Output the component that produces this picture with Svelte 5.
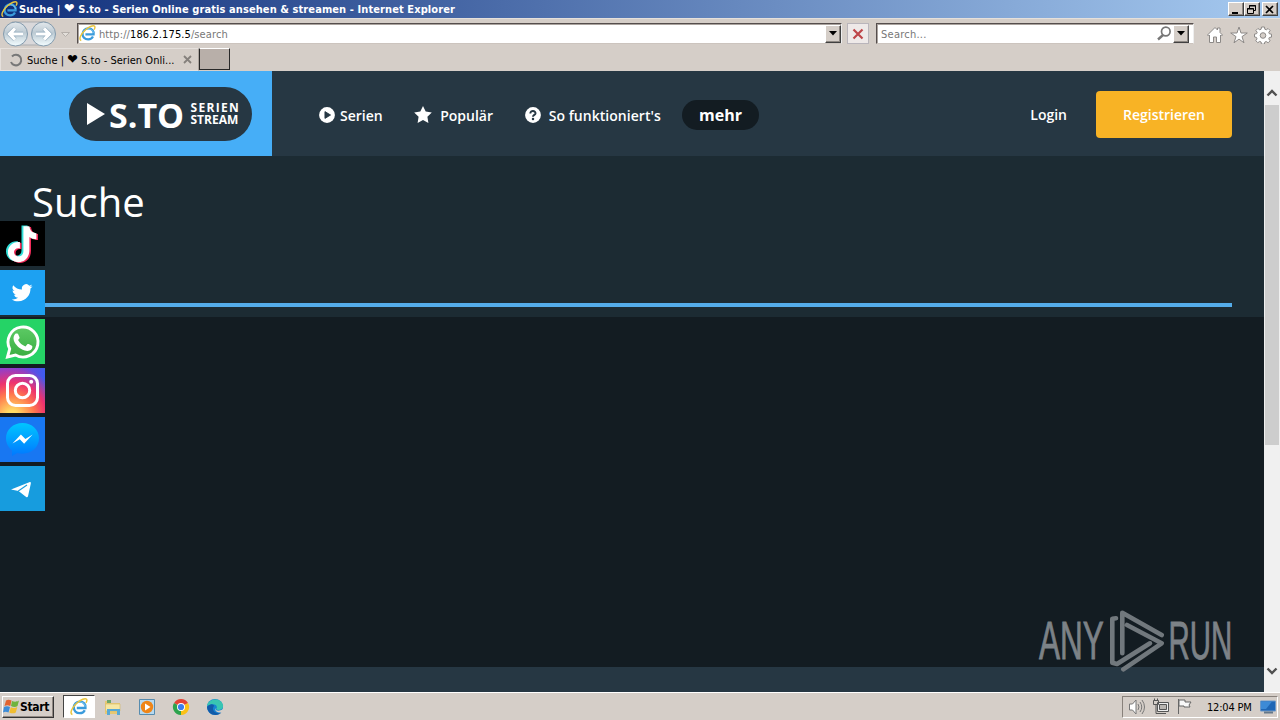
<script lang="ts">
	const pageTitle = 'S.to - Serien Online gratis ansehen & streamen - Internet Explorer'
	const tabTitle = 'S.to - Serien Onli...'

	const navItems = [
		{ id: 'series', label: 'Serien', icon: 'play' },
		{ id: 'popular', label: 'Populär', icon: 'star' },
		{ id: 'help', label: "So funktioniert's", icon: 'question' }
	]

	const socials = ['tiktok', 'twitter', 'whatsapp', 'instagram', 'messenger', 'telegram']

	const starPath = 'M9 0l2.7 5.6 6.1.8-4.4 4.3 1 6.2L9 14l-5.4 2.9 1-6.2L.2 6.4l6.1-.8z'
	const tiktokPath =
		'M19 4h6c.5 4.300 2.700 6.600 7 7v6.100c-2.700 0-5-.8-7-2.200v12.800C25 35 20.300 40 14.200 40 8.200 40 3.500 35.600 3.500 30c0-6.300 5.400-11 12-10.100v6.300c-3.300-1-5.900.9-5.900 3.700 0 2.600 2 4.200 4.500 4.200 3 0 4.900-1.900 4.900-5.100z'
</script>

{#snippet ieLogo(size: number)}
	<svg class="ie" width={size} height={size} viewBox="0 0 18 18">
		<path d="M14.800 12.200c-.9 1.900-2.800 3-5.100 3-3.500 0-5.900-2.300-5.900-5.600 0-3.500 2.600-6 6.100-6 3.700 0 6 2.600 5.600 6.400H6.800" fill="none" stroke="#3a9bdc" stroke-width="2.300" />
		<path d="M4 9c.5-3 3-5 6-5s5 2 5.300 4.500" fill="none" stroke="#7cc9f2" stroke-width="1" />
		<path d="M2.400 16.400C-.8 15.600 2 9.300 7 5c4-3.500 8.300-5.100 9.500-3.700.7.8.3 2.200-.5 3.500" fill="none" stroke="#e9c43c" stroke-width="1.500" />
	</svg>
{/snippet}

{#snippet navIcon(name: string)}
	<svg class="nav-icon" viewBox="0 0 18 18">
		{#if name === 'star'}
			<path d={starPath} fill="#fff" />
		{:else}
			<circle cx="9" cy="9" r="8.900" fill="#fff" />
			{#if name === 'play'}
				<path d="M6.700 5.200v7.600L13 9z" fill="#263743" stroke="#263743" stroke-linejoin="round" />
			{:else}
				<path d="M6 7.200c0-3.800 6.200-3.300 5.800.1C11.500 9 9 8.800 9 11" fill="none" stroke="#263743" stroke-width="2.200" />
				<circle cx="9" cy="13.500" r="1.400" fill="#263743" />
			{/if}
		{/if}
	</svg>
{/snippet}

{#snippet chevron(up: boolean)}
	<svg class="chevron" width="12" height="8" viewBox="0 0 12 8">
		<path d={up ? 'M1.500 6.500L6 2l4.500 4.500' : 'M1.500 1.500L6 6l4.500-4.500'} fill="none" stroke="#505050" stroke-width="2.400" />
	</svg>
{/snippet}

<div class="screen">
	<div class="titlebar">
		{@render ieLogo(17)}
		<span class="title">Suche | <i>❤</i> {pageTitle}</span>
		<div class="window-buttons">
			<button aria-label="Minimize"><svg viewBox="0 0 13 11"><path d="M3 8h6v2H3z" /></svg></button>
			<button aria-label="Restore"><svg viewBox="0 0 13 11"><path d="M4.500 4V1.500h6v5H8M2.500 4.500h6v5h-6zM4 2h7M2 5h7" fill="none" stroke="#000" /></svg></button>
			<button class="close" aria-label="Close"><svg viewBox="0 0 13 11"><path d="M3 2l7 7M10 2L3 9" stroke="#000" stroke-width="1.700" /></svg></button>
		</div>
	</div>

	<div class="toolbar">
		<svg class="history" width="74" height="28" viewBox="0 0 74 28">
			<defs>
				<linearGradient id="nav-fill" x2="0" y2="1">
					<stop offset="0" stop-color="#e3e8ec" />
					<stop offset=".45" stop-color="#bccad3" />
					<stop offset="1" stop-color="#f3fdff" />
				</linearGradient>
			</defs>
			<path d="M12 2h34v23H12z" fill="#d9d8da" stroke="#a9acb0" />
			<circle cx="15.500" cy="14" r="12" fill="url(#nav-fill)" stroke="#849bad" />
			<circle cx="43.500" cy="14" r="12" fill="url(#nav-fill)" stroke="#849bad" />
			<path d="M23 14H10m5-5.500L9.500 14l5.500 5.500M36 14h13m-5-5.500l5.500 5.500-5.500 5.500" fill="none" stroke="#8ba5b8" stroke-width="4.500" />
			<path d="M23 14H10m5-5.500L9.500 14l5.500 5.500M36 14h13m-5-5.500l5.500 5.500-5.500 5.500" fill="none" stroke="#fff" stroke-width="3.200" />
			<path d="M61.500 12.500h8l-4 4z" fill="#e3dfda" stroke="#b5afaa" />
		</svg>
		<div class="field address">
			{@render ieLogo(17)}
			<span class="url">http://<b>186.2.175.5</b>/search</span>
			<button class="drop" aria-label="Show addresses"><svg width="8" height="5"><path d="M0 0h8L4 4.500z" /></svg></button>
		</div>
		<button class="stop" aria-label="Stop">
			<svg width="12" height="12" viewBox="0 0 12 12"><path d="M1.500 1.500l9 9M10.500 1.500l-9 9" stroke="#bd4548" stroke-width="2.200" /></svg>
		</button>
		<div class="field search">
			<span class="placeholder">Search...</span>
			<svg class="magnifier" width="15" height="15" viewBox="0 0 15 15"><g fill="none" stroke="#777"><circle cx="8.800" cy="5.500" r="4.300" stroke-width="1.700" /><path d="M6 9l-5 4.500" stroke-width="2.400" /></g></svg>
			<button class="drop" aria-label="Search providers"><svg width="8" height="5"><path d="M0 0h8L4 4.500z" /></svg></button>
		</div>
		<div class="tools">
			<svg viewBox="0 0 18 18"><path d="M1.500 9L9 1.500l2.500 2.500V2h2.500v4.500L16.500 9l-1 1-1-1v7.500h-4V11h-3v5.500h-4V9l-1 1z" /></svg>
			<svg viewBox="0 0 18 18"><path d="M9 1l2 6h6.300L12 10.600l2 6.200-5-3.700-5 3.700 2-6.200L.7 7H7z" /></svg>
			<svg viewBox="0 0 18 18"><path d="M7.500 1h3l.3 2.200 1.500.6 1.800-1.300 2 2-1.300 1.900.6 1.400 2.100.4v2.900l-2.200.4-.5 1.400 1.300 1.900-2 2-1.900-1.300-1.400.6-.4 2h-3l-.3-2.100-1.400-.6-1.900 1.300-2-2 1.200-1.800-.5-1.500-2-.4V8.100l2.100-.4.6-1.400-1.300-1.800 2-2 1.900 1.300 1.300-.6z" /><circle cx="9" cy="9.500" r="2.800" fill="#d5cec8" /></svg>
		</div>
	</div>

	<div class="tabs">
		<div class="tab">
			<svg width="14" height="14" viewBox="0 0 14 14"><path d="M3 3.500A5.300 5.300 0 1 1 2 9" fill="none" stroke="#777" stroke-width="2" /></svg>
			<span>Suche | <i>❤</i> {tabTitle}</span>
			<svg class="tab-close" width="9" height="9" viewBox="0 0 9 9"><path d="M1 1l7 7M8 1L1 8" stroke="#85807c" stroke-width="1.800" /></svg>
		</div>
		<button class="new-tab" aria-label="New tab"></button>
	</div>

	<div class="viewport">
		<div class="page">
			<header>
				<div class="logo-block">
					<div class="logo">
						<svg width="18" height="22"><path d="M0 0v22l18-11z" fill="#fff" /></svg>
						<strong>S.TO</strong>
						<div class="logo-sub"><span class="serien">SERIEN</span><span>STREAM</span></div>
					</div>
				</div>
				<nav>
					{#each navItems as item}
						<a class={item.id} href="#{item.id}">{@render navIcon(item.icon)}<span>{item.label}</span></a>
					{/each}
					<button class="more">mehr</button>
				</nav>
				<a class="login" href="#login">Login</a>
				<button class="register">Registrieren</button>
			</header>
			<section>
				<h1>Suche</h1>
				<hr />
			</section>
			<main></main>
			<footer></footer>

			<aside>
				{#each socials as social}
					<div class="social {social}">
						<svg width="45" height="45" viewBox="0 0 45 45">
							{#if social === 'tiktok'}
								<path transform="translate(2.500 .5)" d={tiktokPath} fill="#31ded8" />
								<path transform="translate(6 2)" d={tiktokPath} fill="#f42c5b" />
								<path transform="translate(4.400 1.200)" d={tiktokPath} fill="#fff" />
							{:else if social === 'twitter'}
								<path transform="translate(12 12) scale(.87)" d="M23.600 4.900c-.9.4-1.800.7-2.800.8 1-.6 1.800-1.600 2.200-2.700-1 .6-2 1-3.100 1.200A4.900 4.900 0 0 0 11.500 8.700C7.400 8.500 3.800 6.600 1.400 3.600a4.900 4.900 0 0 0 1.500 6.600c-.8 0-1.500-.2-2.200-.6 0 2.400 1.600 4.400 3.900 4.900-.7.200-1.500.2-2.200.1.600 2 2.400 3.400 4.600 3.400A9.900 9.900 0 0 1-.3 20c2.200 1.400 4.700 2.200 7.500 2.200 9.100 0 14.300-7.700 14-14.600 1-.7 1.800-1.600 2.400-2.700z" fill="#fff" />
							{:else if social === 'whatsapp'}
								<defs><linearGradient id="phone-fill" x2="0" y2="1"><stop stop-color="#5dca65" /><stop offset="1" stop-color="#3aae42" /></linearGradient></defs>
								<path d="M7.500 38l2.200-8.100A15 15 0 1 1 15.500 36z" fill="url(#phone-fill)" stroke="#fff" stroke-width="2.900" />
								<path d="M16.800 14.500c.8 0 1.200.2 1.500 1l1.300 3c.2.600-.7 1.700-1.500 2.500 1.800 3.300 4.100 5.100 7.400 6.500l1.800-2.200c.4-.5.800-.5 1.400-.2l3.200 1.600c.8.400.5 2.500-.5 3.600-1.500 1.700-4.100 2-6.700 1.200-5.500-1.800-9.300-5.700-10.800-9.700-.8-2.500-.3-5 1.200-6.700.5-.5 1-.6 1.700-.6z" fill="#fff" />
							{:else if social === 'instagram'}
								<rect x="7.500" y="7.500" width="30" height="30" rx="8" fill="none" stroke="#fff" stroke-width="3" />
								<circle cx="22.500" cy="22.500" r="7.200" fill="none" stroke="#fff" stroke-width="3" />
								<circle cx="31.200" cy="13.800" r="2" fill="#fff" />
							{:else if social === 'messenger'}
								<defs><linearGradient id="bubble" x2="0" y2="1"><stop stop-color="#00c6ff" /><stop offset="1" stop-color="#0078ff" /></linearGradient></defs>
								<path d="M22.500 6C13 6 6 12.600 6 21.300c0 5 2.300 9.300 6 12.100V39l5.300-3c1.700.5 3.400.7 5.200.7 9.500 0 16.500-6.800 16.500-15.400S32 6 22.500 6z" fill="url(#bubble)" />
								<path d="M12.500 26.500l8.400-9 4.500 4.400 7.200-4.400-8.500 9.200-4.300-4.500z" fill="#fff" />
							{:else}
								<path d="M11 23.500l18.300-7.300c1.200-.4 1.800.2 1.500 1.500L28 30.200c-.3 1-1 1.200-1.800.7l-7.700-5.800L11 23.500z" fill="#fff" />
								<path d="M18.300 25L27 19" stroke="#179cde" stroke-width="1.100" />
							{/if}
						</svg>
					</div>
				{/each}
			</aside>

			<svg class="watermark" width="224" height="80" viewBox="0 0 224 80">
				<g fill="#82888d" stroke="#82888d" stroke-width=".9" font-family="Liberation Sans, Arial, sans-serif" font-size="53">
					<text transform="translate(4 50) scale(.594 1)">ANY</text>
					<text transform="translate(133.500 50) scale(.555 1)">RUN</text>
				</g>
				<g fill="none" stroke="#777d82" stroke-width="4.600" stroke-linejoin="round" stroke-linecap="round">
					<path d="M81 9.300l-3.700.4V53.700l4.700 1.300 33-20.700" />
					<path d="M87.300 44.300V3.700L126.700 26M92 16l34.700 18.300-38.400 26" />
				</g>
			</svg>
		</div>
		<div class="scrollbar">
			{@render chevron(true)}
			<div class="thumb"></div>
			{@render chevron(false)}
		</div>
	</div>

	<div class="taskbar">
		<button class="start">
			<svg width="17" height="17" viewBox="0 0 17 17"><path d="M3 2.500c2-1.300 3.500-1 5.500 0L7.300 8C5.300 7 3.500 7 1.500 8z" fill="#e16330" /><path d="M9 3c2 1 5 1 7-.5L14.500 8c-2 1.500-4.500 1-6.500 0z" fill="#6fb33e" /><path d="M1 9c2-1 4-1 6 0l-1.500 5.500c-2-1-4-1-5.500 0z" fill="#3d8cd8" /><path d="M7.800 9.200c2 1 4.500 1 6.500-.3l-1.500 5.500c-2 1.300-4.500 1-6.500 0z" fill="#f0bd31" /></svg>
			<span>Start</span>
		</button>
		<div class="task active">{@render ieLogo(18)}</div>
		<div class="task">
			<svg width="18" height="18" viewBox="0 0 18 18"><path d="M1 3h5l1 2h9v11H1z" fill="#e7c873" /><path d="M3 2h4v3H3z" fill="#6ea669" /><path d="M1.500 6h14.500v7H1.500z" fill="#f5e7a4" stroke="#d5b867" stroke-width=".6" /><path d="M3 17v-6h13v6h-3v-4H6v4z" fill="#58a9d5" /></svg>
		</div>
		<div class="task">
			<svg width="18" height="18" viewBox="0 0 18 18"><path d="M1.500 1.500h15v15h-15z" fill="#b7d9f0" stroke="#578caf" /><circle cx="9" cy="9" r="6.200" fill="#ef8518" /><path d="M7 5.500v7L12.500 9z" fill="#fff" /></svg>
		</div>
		<div class="task">
			<svg width="18" height="18" viewBox="0 0 18 18"><path d="M9 9L2.100 5A8 8 0 0 1 16 5z" fill="#e34335" /><path d="M9 9l7-4a8 8 0 0 1-7 12z" fill="#fbc116" /><path d="M9 9v8A8 8 0 0 1 2 5z" fill="#2da34d" /><circle cx="9" cy="9" r="4" fill="#fff" /><circle cx="9" cy="9" r="3.100" fill="#3b7ded" /></svg>
		</div>
		<div class="task">
			<svg width="18" height="18" viewBox="0 0 18 18"><circle cx="9" cy="9" r="8" fill="#1683d2" /><path d="M1 8C2 0 15-1 17 7c1 5-5 6-7 4 3-3-2-7-9-3z" fill="#39c5b2" /><path d="M1 9c3-4 7-3 7-1-2 2-1 6 3 7 2 .6 4 0 5-1-4 5-14 4-15-5z" fill="#125ba9" /><path d="M9 10c1 4 5 3 8 1v3c-3 1-8 1-8-4z" fill="#d5cec8" /></svg>
		</div>
		<div class="tray">
			<svg width="18" height="18" viewBox="0 0 18 18"><g fill="#fff" stroke="#777"><path d="M1.500 6h3L8 2v14l-3.500-4h-3z" /><path d="M10 6q2 3 0 6M12 4q3.500 5 0 10M14 2q5 7 0 14" fill="none" /></g></svg>
			<svg width="18" height="18" viewBox="0 0 18 18"><g fill="#eee" stroke="#555"><path d="M5.500 4.500h11v9h-11z" /><path d="M7.500 6.500h7v5h-7z" fill="#b9b5b1" /><path d="M1.500 2.500h5v4h-5zM2.500 .5v2M5.500 .5v2M4 7v8.500h10" fill="none" /></g></svg>
			<svg width="18" height="18" viewBox="0 0 18 18"><path d="M2.500 1v15M3 2h6v2h6l-2 3 1 2H8V8H3z" fill="#f8f8f8" stroke="#666" /></svg>
			<span>12:04 PM</span>
			<svg width="16" height="14" viewBox="0 0 16 14"><path d="M.5 1h15v10H.5z" fill="#1f66b5" stroke="#6c98c8" /><path d="M1 1.500h11L6 9H1z" fill="#3d8ad6" /><path d="M4 12.500h9" stroke="#64788b" stroke-width="2" /></svg>
		</div>
	</div>
</div>

<style>
	:global(body) {
		margin: 0;
		overflow: hidden;
	}

	* {
		box-sizing: border-box;
	}

	svg {
		display: block;
		flex-shrink: 0;
	}

	button {
		padding: 0;
		font: inherit;
	}

	a {
		color: inherit;
		text-decoration: none;
	}

	i {
		font-size: 14px;
		font-style: normal;
		line-height: 10px;
	}

	.screen {
		display: flex;
		flex-direction: column;
		width: 1280px;
		height: 720px;
		background: #d5cec8;
		font-family: 'DejaVu Sans Condensed', 'DejaVu Sans', sans-serif;
		font-size: 11px;
		color: #000;
	}

	.titlebar {
		display: flex;
		align-items: center;
		height: 18px;
		padding-left: 1px;
		padding-right: 2px;
		background: linear-gradient(90deg, #102f7b, #a6caf0);
		color: #fff;
	}

	.title {
		margin-left: 1px;
		font-weight: bold;
		white-space: nowrap;
		letter-spacing: 0.09px;
	}

	.window-buttons {
		display: flex;
		margin-left: auto;
	}

	.window-buttons button,
	.drop {
		width: 16px;
		height: 14px;
		background: #d5cec8;
		border: 1px solid;
		border-color: #fff #404040 #404040 #fff;
		box-shadow: inset -1px -1px #8d8782;
	}

	.window-buttons svg {
		width: 13px;
		height: 11px;
	}

	.window-buttons .close {
		margin-left: 2px;
	}

	.toolbar {
		display: flex;
		align-items: center;
		height: 30px;
		border-top: 1px solid #e5e0db;
	}

	.history {
		margin-right: 3px;
	}

	.field {
		display: flex;
		align-items: center;
		height: 21px;
		background: #fff;
		border: 1px solid;
		border-color: #554e4d #eee #ccc4be #554e4d;
		box-shadow: inset 1px 1px #aaa39e;
		color: #777;
	}

	.address {
		width: 765px;
		padding-left: 1px;
	}

	.url {
		margin-left: 3px;
		padding-top: 1px;
		letter-spacing: 0.1px;
	}

	.placeholder {
		padding-top: 1px;
		letter-spacing: 0.25px;
	}

	.url b {
		font-weight: normal;
		color: #000;
	}

	.drop {
		display: flex;
		align-items: center;
		justify-content: center;
		height: 18px;
		margin-left: auto;
	}

	.stop {
		display: grid;
		place-items: center;
		width: 22px;
		height: 21px;
		margin-left: 5px;
		background: #eee9e8;
		border: 1px solid #b9b5bb;
	}

	.search {
		width: 318px;
		margin-left: 7px;
		padding-left: 4px;
		padding-right: 4px;
	}

	.magnifier {
		margin-left: auto;
	}

	.search .drop {
		margin-left: 1px;
	}

	.tools {
		display: flex;
		gap: 6px;
		margin-left: 12px;
		padding-top: 2px;
	}

	.tools svg {
		width: 18px;
		height: 18px;
		fill: #fff;
		stroke: #8c8987;
	}

	.tabs {
		display: flex;
		height: 23px;
	}

	.tab {
		display: flex;
		align-items: center;
		width: 199px;
		padding-left: 8px;
		border: 1px solid #e6e1dd;
		border-right-color: #aaa39d;
	}

	.tab span {
		margin-left: 4px;
		padding-top: 1px;
		letter-spacing: 0.03px;
		white-space: nowrap;
	}

	.tab-close {
		margin-left: auto;
		margin-right: 6px;
	}

	.new-tab {
		width: 31px;
		height: 22px;
		background: #b8afa9;
		border: 1px solid;
		border-color: #fff #282828 #282828;
	}

	.viewport {
		display: flex;
		height: 621px;
	}

	.page {
		position: relative;
		width: 1264px;
		background: #131c22;
		color: #fff;
		font-family: 'Open Sans', 'Noto Sans', sans-serif;
	}

	header {
		display: flex;
		align-items: center;
		height: 85px;
		padding-right: 32px;
		background: #263743;
		font-size: 14px;
		font-weight: 600;
	}

	.logo-block {
		width: 272px;
		height: 85px;
		padding: 16px 0 0 69px;
		background: #46aef7;
	}

	.logo {
		display: flex;
		align-items: center;
		width: 183px;
		height: 54px;
		padding-left: 18px;
		border-radius: 27px;
		background: #263743;
	}

	.logo strong {
		margin-left: 4px;
		padding-top: 1px;
		width: 81.5px;
		font-size: 34px;
		font-weight: 700;
		line-height: 54px;
	}

	.logo-sub {
		display: flex;
		flex-direction: column;
		font-size: 12px;
		font-weight: 700;
		line-height: 12px;
	}

	.serien {
		letter-spacing: 1.3px;
	}

	nav {
		display: flex;
		align-items: center;
		margin-left: 47px;
		padding-top: 3px;
	}

	nav a {
		display: flex;
		align-items: center;
		gap: 8px;
	}

	nav .series {
		gap: 5px;
	}

	nav .popular {
		gap: 8.5px;
		margin-left: 31px;
	}

	nav .help {
		margin-left: 31.7px;
		letter-spacing: 0.04px;
	}

	.nav-icon {
		width: 16px;
		height: 16px;
	}

	.popular .nav-icon {
		width: 18px;
		height: 18px;
	}

	.more {
		width: 77px;
		height: 30px;
		margin-left: 21.300px;
		border: 0;
		border-radius: 15px;
		background: #131c22;
		color: #fff;
		font-size: 16px;
		font-weight: 700;
	}

	.login {
		margin-left: auto;
		margin-right: 29px;
		padding-top: 2px;
	}

	.register {
		width: 136px;
		height: 47px;
		margin-top: 2px;
		padding: 0;
		border: 0;
		border-radius: 4px;
		background: #f8b325;
		color: #fff;
	}

	section {
		height: 161px;
		padding: 19px 32px 0;
		background: #1c2b33;
	}

	h1 {
		height: 128px;
		margin: 0;
		font-size: 40px;
		font-weight: 400;
		line-height: 54px;
	}

	hr {
		height: 4px;
		margin: 0;
		border: 0;
		background: #54ace9;
	}

	main {
		height: 350px;
	}

	footer {
		height: 25px;
		background: #263743;
	}

	aside {
		position: absolute;
		top: 150px;
		left: 0;
		display: flex;
		flex-direction: column;
		gap: 4px;
	}

	.social {
		width: 45px;
		height: 45px;
	}

	.tiktok {
		background: #000;
	}

	.twitter {
		background: #1da1f2;
	}

	.whatsapp {
		background: #25d366;
	}

	.instagram {
		background:
			radial-gradient(circle at 27% 108%, #ffdd65 0 10%, #ff784d 38%, #ee326e 58%, transparent 85%),
			linear-gradient(90deg, #8c3fd0 10%, #7b40d8 50%, #3d5cf0 100%);
	}

	.messenger {
		background: #1877f2;
	}

	.telegram {
		background: #179cde;
	}

	.watermark {
		position: absolute;
		left: 1035px;
		top: 538px;
		opacity: 0.95;
	}

	.scrollbar {
		display: flex;
		flex-direction: column;
		align-items: center;
		width: 16px;
		padding: 18px 0 17px;
		background: #f0f0f0;
	}

	.thumb {
		width: 14px;
		height: 340px;
		margin-top: 8px;
		margin-bottom: auto;
		background: #cdcdcd;
	}

	.taskbar {
		display: flex;
		align-items: center;
		height: 28px;
		padding: 0 0 0 2px;
		border-top: 1px solid #fff;
	}

	.start {
		display: flex;
		align-items: center;
		width: 52px;
		height: 22px;
		background: #d5cec8;
		border: 1px solid;
		border-color: #fff #353535 #353535 #fff;
		box-shadow: inset -1px -1px #918983;
		font-size: 12px;
		font-weight: bold;
		letter-spacing: -0.3px;
	}

	.task {
		display: grid;
		place-items: center;
		width: 34px;
		height: 23px;
	}

	.task.active {
		width: 32px;
		margin-left: 9px;
		margin-right: 1px;
		background: #fff;
		border: 1px solid;
		border-color: #444 #fff #fff #444;
	}

	.tray {
		display: flex;
		align-items: center;
		width: 156px;
		height: 22px;
		margin-left: auto;
		margin-right: 2px;
		padding-left: 5px;
		gap: 6px;
		border: 1px solid;
		border-color: #88817b #fff #fff #88817b;
	}

	.tray span {
		margin-left: 7px;
		padding-top: 1px;
		white-space: nowrap;
		letter-spacing: -0.2px;
	}

	.tray svg:last-child {
		margin-left: 2px;
	}
</style>
